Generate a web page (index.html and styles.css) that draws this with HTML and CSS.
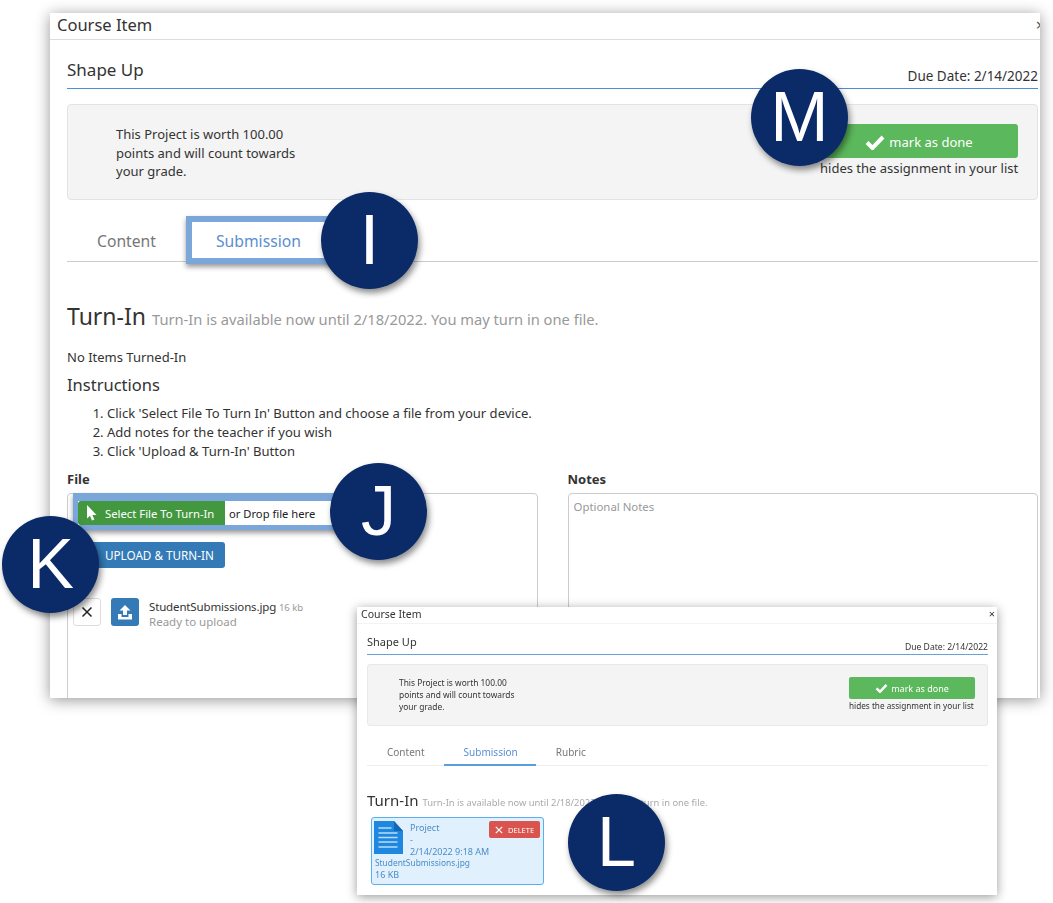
FILE: index.html
```html
<!DOCTYPE html>
<html lang="en">
<head>
<meta charset="utf-8">
<title>Course Item</title>
<link rel="stylesheet" href="styles.css">
</head>
<body>
<main class="canvas">
  <section class="window main-window">
    <header class="win-head"><span class="win-title">Course Item</span><span class="win-close">×</span></header>
    <div class="win-body">
      <div class="title-row"><h1 class="item-title">Shape Up</h1><span class="due">Due Date: 2/14/2022</span></div>
      <div class="well">
        <p class="well-text">This Project is worth 100.00 points and will count towards your grade.</p>
        <div class="done-col">
          <button class="done-btn"><svg class="check" viewBox="0 0 20 16"><path d="M2 8.500 7.500 14 18 3" fill="none" stroke="#fff" stroke-width="4"/></svg>mark as done</button>
          <span class="done-note">hides the assignment in your list</span>
        </div>
      </div>
      <nav class="tabs"><a class="tab">Content</a><a class="tab tab-on">Submission</a></nav>
      <h2 class="turnin">Turn-In <small>Turn-In is available now until 2/18/2022. You may turn in one file.</small></h2>
      <p class="none">No Items Turned-In</p>
      <h3 class="instr">Instructions</h3>
      <ol class="steps">
        <li>Click 'Select File To Turn In' Button and choose a file from your device.</li>
        <li>Add notes for the teacher if you wish</li>
        <li>Click 'Upload &amp; Turn-In' Button</li>
      </ol>
      <div class="form-cols">
        <div class="form-col">
          <label class="lbl">File</label>
          <div class="file-box">
            <div class="pick-row">
              <button class="pick-btn"><svg class="cursor" viewBox="0 0 11 16"><path d="M1 0v13.500l3-2.800 2 4.800 2.400-1-2-4.600H10.500z" fill="#fff"/></svg>Select File To Turn-In</button>
              <span class="drop">or Drop file here</span>
            </div>
            <button class="upload-btn">UPLOAD &amp; TURN-IN</button>
            <div class="file-row">
              <span class="x-btn"><svg viewBox="0 0 12 12"><path d="M1.500 1.500l9 9M10.500 1.500l-9 9" stroke="#222" stroke-width="1.500"/></svg></span>
              <span class="up-icon"><svg viewBox="0 0 28 28"><path d="M14 7l5.500 5.500H16v4.500h-4v-4.500H8.500z" fill="#fff"/><path d="M7 16H10.500v3h7v-3H21v5.500H7z" fill="#fff"/></svg></span>
              <div class="file-meta">
                <div class="file-name">StudentSubmissions.jpg <small>16 kb</small></div>
                <div class="file-state">Ready to upload</div>
              </div>
            </div>
          </div>
        </div>
        <div class="form-col">
          <label class="lbl">Notes</label>
          <div class="notes-box">Optional Notes</div>
        </div>
      </div>
    </div>
  </section>

  <div class="hl hl-tab"></div>
  <div class="hl hl-file"></div>

  <section class="window mini-window">
    <header class="mini-head"><span>Course Item</span><span class="mini-close">×</span></header>
    <div class="mini-body">
      <div class="mini-title-row"><h1 class="mini-item">Shape Up</h1><span class="mini-due">Due Date: 2/14/2022</span></div>
      <div class="mini-well">
        <p class="mini-text">This Project is worth 100.00 points and will count towards your grade.</p>
        <div class="mini-done">
          <button class="mini-btn"><svg class="mini-check" viewBox="0 0 20 16"><path d="M2 8.500 7.500 14 18 3" fill="none" stroke="#fff" stroke-width="4"/></svg>mark as done</button>
          <span class="mini-note">hides the assignment in your list</span>
        </div>
      </div>
      <nav class="mini-tabs"><a class="mini-tab">Content</a><a class="mini-tab mini-on">Submission</a><a class="mini-tab">Rubric</a></nav>
      <h2 class="mini-turnin">Turn-In <small>Turn-In is available now until 2/18/2022. You may turn in one file.</small></h2>
      <div class="card">
        <div class="card-top">
          <svg class="doc" viewBox="0 0 29 33"><path d="M0 0h20l9 10v23H0z" fill="#1e88e0"/><path d="M20 0l9 10H20z" fill="#1467b5"/><path d="M4.500 7h13M4.500 12h19M4.500 16.500h19M4.500 21h19M4.500 26h19" stroke="#b9dcf8" stroke-width="1.600"/></svg>
          <div class="card-lines"><div>Project</div><div>-</div><div>2/14/2022 9:18 AM</div></div>
          <button class="del-btn"><svg class="del-x" viewBox="0 0 10 10"><path d="M1 1l8 8M9 1l-8 8" stroke="#fff" stroke-width="1.500"/></svg>DELETE</button>
        </div>
        <div class="card-file card-name">StudentSubmissions.jpg</div>
        <div class="card-file">16 KB</div>
      </div>
    </div>
  </section>

  <div class="badge badge-i">I</div>
  <div class="badge badge-m">M</div>
  <div class="badge badge-j">J</div>
  <div class="badge badge-k">K</div>
  <div class="badge badge-l">L</div>
</main>
</body>
</html>
```
FILE: styles.css
```css
* { box-sizing: border-box; }
html, body { margin: 0; padding: 0; background: #fff; }
body { font-family: "Noto Sans", "Open Sans", sans-serif; color: #333; }
h1, h2, h3, p { margin: 0; font-weight: 400; }
button { font-family: inherit; border: 0; padding: 0; }
.canvas { position: relative; width: 1053px; height: 903px; overflow: hidden; }

.window { position: absolute; background: #fff; overflow: hidden; }
.main-window { left: 50px; top: 13px; width: 990px; height: 685px; box-shadow: 0 2px 14px rgba(0,0,0,.42); }
.win-head { height: 27px; display: flex; justify-content: space-between; padding: 0 0 0 7px; border-bottom: 1px solid #ddd; font-size: 16.500px; line-height: 24px; color: #333; }
.win-close { font-size: 16px; margin-right: -5px; color: #555; }
.win-body { padding: 0 2px 0 17px; }
.title-row { height: 49px; display: flex; justify-content: space-between; align-items: flex-end; border-bottom: 1px solid #4a8fd6; }
.item-title { font-size: 17px; line-height: 24px; margin-bottom: 6px; }
.due { font-size: 13.500px; line-height: 18px; margin-bottom: 3px; }
.well { margin-top: 15px; height: 96px; background: #f4f4f4; border: 1px solid #e3e3e3; border-radius: 4px; padding: 19px 19px 0 48px; display: flex; justify-content: space-between; }
.well-text { width: 200px; padding-top: 1px; font-size: 13px; line-height: 18.600px; }
.done-col { width: 198px; display: flex; flex-direction: column; }
.done-btn { height: 34px; padding-top: 1px; background: #5cb85c; color: #fff; font-size: 13px; border-radius: 3px; display: flex; align-items: center; justify-content: center; }
.check { width: 20px; height: 16px; margin-right: 4px; }
.done-note { font-size: 13px; line-height: 20px; white-space: nowrap; }
.tabs { margin-top: 15px; height: 47px; display: flex; border-bottom: 1px solid #ccc; padding: 6px 0 0 30px; gap: 60px; align-items: center; font-size: 15.700px; color: #777; }
.tab-on { color: #5a8fd0; }
.turnin { margin-top: 38px; font-size: 23px; line-height: 32px; white-space: nowrap; }
.turnin small { font-size: 14.700px; color: #999; }
.none { margin-top: 13px; font-size: 13px; line-height: 18px; }
.instr { margin-top: 7px; font-size: 16.500px; line-height: 24px; }
.steps { margin: 7px 0 0; padding-left: 40px; font-size: 13.050px; line-height: 19px; }
.form-cols { margin-top: 9px; display: flex; gap: 30px; }
.form-col { width: 470.500px; }
.lbl { display: block; font-size: 13px; font-weight: 700; line-height: 18px; margin-bottom: 5px; }
.file-box { height: 260px; border: 1px solid #ccc; border-radius: 4px; padding: 7px 5px 0 5px; }
.pick-row { display: flex; align-items: center; padding-left: 5px; }
.pick-btn { width: 147px; height: 24px; background: #43983f; color: #fff; font-size: 11.300px; border-radius: 3px 0 0 3px; display: flex; align-items: center; padding-left: 8px; }
.cursor { width: 11px; height: 16px; margin-right: 8px; }
.drop { margin-left: 4px; font-size: 11.200px; color: #222; }
.upload-btn { display: block; margin: 17px 0 0 5px; width: 147px; height: 26px; background: #337ab7; color: #fff; font-size: 11.700px; border-radius: 3px; padding-left: 27px; text-align: left; }
.file-row { margin-top: 30px; display: flex; }
.x-btn { width: 28px; height: 28px; border: 1px solid #ddd; border-radius: 3px; display: flex; align-items: center; justify-content: center; }
.x-btn svg { width: 12px; height: 12px; }
.up-icon { width: 28px; height: 28px; margin-left: 10px; background: #337ab7; border-radius: 3px; }
.up-icon svg { display: block; width: 28px; height: 28px; }
.file-meta { margin-left: 10px; }
.file-name { font-size: 11.500px; letter-spacing: -.15px; line-height: 15px; margin-top: 1px; white-space: nowrap; }
.file-name small { font-size: 9.500px; letter-spacing: 0; color: #999; }
.file-state { font-size: 11.500px; line-height: 13px; color: #999; }
.notes-box { height: 260px; border: 1px solid #ccc; border-radius: 4px; padding: 4px 5px; font-size: 11.400px; line-height: 17px; color: #999; }

.hl { position: absolute; border-style: solid; border-color: #7ba6da; box-shadow: 0 3px 5px rgba(0,0,0,.4); }
.hl-tab { left: 186px; top: 216px; width: 150px; height: 48px; border-width: 6px; }
.hl-file { left: 73px; top: 493px; width: 270px; height: 37px; border-width: 8px 5px 5px; }

.mini-window { left: 357px; top: 607px; width: 640px; height: 288px; box-shadow: 0 2px 10px rgba(0,0,0,.4); filter: blur(.3px); }
.mini-head { height: 17px; display: flex; justify-content: space-between; padding: 0 0 0 4px; border-bottom: 1px solid #f3f3f3; font-size: 10.500px; line-height: 14px; }
.mini-close { margin-right: 2px; font-size: 11px; }
.mini-body { padding: 0 9px 0 10px; }
.mini-title-row { height: 31px; display: flex; justify-content: space-between; align-items: flex-end; border-bottom: 1px solid #6b9fd8; }
.mini-item { font-size: 11px; line-height: 14px; margin-bottom: 5px; }
.mini-due { font-size: 8.600px; line-height: 12px; margin-bottom: 1px; }
.mini-well { margin-top: 9px; height: 62px; background: #f4f4f4; border: 1px solid #e8e8e8; border-radius: 3px; padding: 12px 12px 0 31px; display: flex; justify-content: space-between; }
.mini-text { width: 128px; font-size: 8.400px; line-height: 12px; }
.mini-done { width: 126px; display: flex; flex-direction: column; }
.mini-btn { height: 22px; background: #5cb85c; color: #fff; font-size: 9px; border-radius: 2px; display: flex; align-items: center; justify-content: center; }
.mini-check { width: 13px; height: 10px; margin-right: 3px; }
.mini-note { font-size: 8.200px; line-height: 13px; white-space: nowrap; }
.mini-tabs { margin-top: 10px; height: 30px; display: flex; border-bottom: 1px solid #eee; font-size: 10px; color: #777; align-items: stretch; }
.mini-tab { padding: 9px 20px 0; line-height: 14px; }
.mini-on { color: #5a8fd0; border-bottom: 2px solid #5a9fdc; margin-left: -1px; margin-bottom: -1px; padding: 9px 18px 0 20px; }
.mini-turnin { margin-top: 24px; font-size: 15px; line-height: 20px; white-space: nowrap; }
.mini-turnin small { font-size: 9.400px; color: #aaa; }
.card { margin: 4px 0 0 4px; width: 173px; height: 68px; background: #e1f0fd; border: 1px solid #5ab0ee; border-radius: 3px; padding: 3px 3px 0 2px; color: #4a8cc7; font-size: 9px; line-height: 12px; }
.card-top { display: flex; height: 36px; }
.doc { width: 29px; height: 33px; flex: none; }
.card-lines { margin-left: 7px; padding-top: 1px; white-space: nowrap; }
.del-btn { margin-left: auto; width: 53px; height: 17px; background: #d9534f; color: #fff; font-size: 7.500px; border-radius: 2px; display: flex; align-items: center; justify-content: center; }
.del-x { width: 8px; height: 8px; margin-right: 5px; }
.card-file { padding-left: 1px; }
.card-name { font-size: 8.400px; }

.badge { position: absolute; width: 97px; height: 97px; border-radius: 50%; background: #0a2a68; color: #fff; font-family: "Liberation Sans", Arial, sans-serif; font-size: 70px; line-height: 97px; text-align: center; box-shadow: 2px 4px 6px rgba(0,0,0,.45); }
.badge-i { left: 321px; top: 192px; }
.badge-m { left: 751px; top: 69px; }
.badge-j { left: 330px; top: 463px; }
.badge-k { left: 2px; top: 516px; }
.badge-l { left: 568px; top: 794px; }
```
